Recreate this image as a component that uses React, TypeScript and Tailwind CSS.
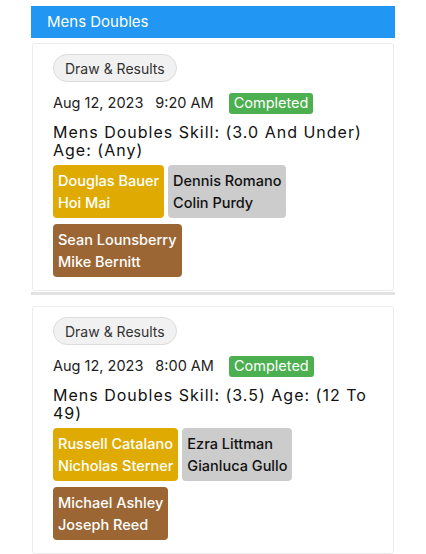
import React from "react";

type Team = { names: [string, string]; color: "gold" | "silver" | "bronze" };
type Event = { date: string; time: string; title: string; teams: Team[] };

const events: Event[] = [
  {
    date: "Aug 12, 2023",
    time: "9:20 AM",
    title: "Mens Doubles Skill: (3.0 And Under) Age: (Any)",
    teams: [
      { names: ["Douglas Bauer", "Hoi Mai"], color: "gold" },
      { names: ["Dennis Romano", "Colin Purdy"], color: "silver" },
      { names: ["Sean Lounsberry", "Mike Bernitt"], color: "bronze" },
    ],
  },
  {
    date: "Aug 12, 2023",
    time: "8:00 AM",
    title: "Mens Doubles Skill: (3.5) Age: (12 To 49)",
    teams: [
      { names: ["Russell Catalano", "Nicholas Sterner"], color: "gold" },
      { names: ["Ezra Littman", "Gianluca Gullo"], color: "silver" },
      { names: ["Michael Ashley", "Joseph Reed"], color: "bronze" },
    ],
  },
];

function TeamBox({ team }: { team: Team }) {
  const cls =
    team.color === "gold"
      ? "bg-[#dfab02] text-white"
      : team.color === "silver"
      ? "bg-[#cccccc] text-[#111]"
      : "bg-[#9c6634] text-white";
  return (
    <div className={`${cls} rounded-[4px] px-[5px] py-[5px] text-[14.5px] font-medium leading-[21.5px]`}>
      <div>{team.names[0]}</div>
      <div>{team.names[1]}</div>
    </div>
  );
}

function Card({ ev }: { ev: Event }) {
  return (
    <div className="mx-[1px] border border-[#ececec] rounded-[3px] bg-white px-[20px] pt-[10px] pb-[13px]">
      <div className="inline-flex h-[28px] items-center rounded-full border border-[#dcdcdc] bg-[#f1f1f1] px-[11px] text-[14px] text-[#333]">
        Draw &amp; Results
      </div>
      <div className="mt-[10px] flex h-[22px] items-center text-[14.5px] text-[#222]">
        <span>{ev.date}</span>
        <span className="ml-[12px]">{ev.time}</span>
        <span className="ml-[15px] inline-flex h-[21px] items-center rounded-[3px] bg-[#4caf50] px-[5px] text-[14.5px] text-white">
          Completed
        </span>
      </div>
      <div className="mt-[9px] text-[16px] leading-[18px] tracking-[1px] text-[#111]">{ev.title}</div>
      <div className="mt-[6px] flex gap-[4px]">
        <TeamBox team={ev.teams[0]} />
        <TeamBox team={ev.teams[1]} />
      </div>
      <div className="mt-[6px] flex">
        <TeamBox team={ev.teams[2]} />
      </div>
    </div>
  );
}

export default function App() {
  return (
    <div className="min-h-[554px] bg-white px-[31px] pt-[6px]" style={{ fontFamily: "Inter, 'Noto Sans', sans-serif" }}>
      <div className="flex h-[32px] items-center bg-[#2196f3] px-[16px] text-[15px] text-white">Mens Doubles</div>
      <div className="mt-[5px]">
        <Card ev={events[0]} />
        <div className="mt-[1px] h-[3px] bg-[#e2e2e2]" />
        <div className="mt-[11px]">
          <Card ev={events[1]} />
        </div>
      </div>
    </div>
  );
}
